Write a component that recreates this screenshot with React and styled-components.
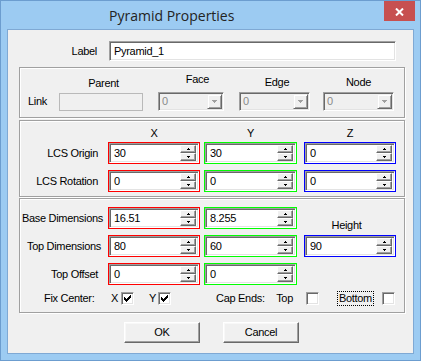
import React from 'react';
import styled, { createGlobalStyle } from 'styled-components';

const GlobalStyle = createGlobalStyle`
  html, body { margin: 0; padding: 0; background: #ffffff; }
  body {
    font-family: "Liberation Sans", Arial, sans-serif;
    font-size: 11px;
    letter-spacing: -0.3px;
    color: #000;
  }
  *, *::before, *::after { box-sizing: border-box; }
`;

const Window = styled.div`
  width: 421px;
  height: 361px;
  border: 1px solid #6c9dcf;
  background: #9ccbf2;
  display: flex;
  flex-direction: column;
`;

const TitleBar = styled.div`
  height: 28px;
  flex-shrink: 0;
  display: flex;
  align-items: flex-start;
`;

const Title = styled.div`
  flex: 1;
  padding: 5px 0 0 108px;
  font-family: "Open Sans", "Noto Sans", sans-serif;
  font-size: 14px;
  line-height: 19px;
  letter-spacing: 0;
  color: #232323;
`;

const CloseButton = styled.div`
  width: 31px;
  height: 20px;
  margin-right: 5px;
  background: #c75050;
  display: flex;
  align-items: center;
  justify-content: center;
  padding-top: 1px;
`;

const Client = styled.div`
  flex: 1;
  margin: 0 6px 6px;
  border: 1px solid #7fa9d4;
  background: #f0f0f0;
  padding: 11px 8px 0 11px;
  display: flex;
  flex-direction: column;
`;

const LabelRow = styled.div`
  display: grid;
  grid-template-columns: 78px 287px;
  column-gap: 12px;
  align-items: center;
  height: 20px;
  flex-shrink: 0;
`;

const Caption = styled.span`
  display: block;
  line-height: 13px;
  white-space: nowrap;
  text-align: ${(p) => p.$align || 'left'};
  padding-right: ${(p) => p.$pr || 0}px;
  padding-left: ${(p) => p.$pl || 0}px;
`;

const TextBox = styled.div`
  height: 20px;
  border: 1px solid;
  border-color: #a0a0a0 #ffffff #ffffff #a0a0a0;
  box-shadow: inset 1px 1px 0 #696969, inset -1px -1px 0 #e3e3e3;
  background: #fff;
  display: flex;
  align-items: center;
  padding: 0 4px;
  line-height: 13px;
`;

const Group = styled.div`
  flex-shrink: 0;
  height: ${(p) => p.$h}px;
  margin-top: ${(p) => p.$mt}px;
  border: 1px solid #a0a0a0;
  box-shadow: inset 1px 1px 0 #ffffff, 1px 1px 0 #ffffff;
  padding: ${(p) => p.$pad};
  display: flex;
  flex-direction: column;
`;

/* ---------- Link group ---------- */
const LinkRow = styled.div`
  flex: 1;
  display: flex;
  align-items: flex-end;
`;

const LinkLabel = styled.div`
  width: 31px;
  height: 18px;
  line-height: 17px;
`;

const LinkColumn = styled.div`
  width: ${(p) => p.$w}px;
  margin-left: ${(p) => p.$ml || 0}px;
  display: flex;
  flex-direction: column;
`;

const ColumnHeader = styled.div`
  line-height: 13px;
  text-align: center;
  padding-left: ${(p) => p.$shift || 0}px;
  margin-bottom: ${(p) => p.$lift}px;
`;

const ParentBox = styled.div`
  height: 18px;
  border: 1px solid #b9b9b9;
  background: #f0f0f0;
`;

const Combo = styled.div`
  height: 19px;
  border: 1px solid;
  border-color: #a0a0a0 #ffffff #ffffff #a0a0a0;
  box-shadow: inset 1px 1px 0 #696969, inset -1px -1px 0 #e3e3e3;
  background: #f0f0f0;
  padding: 1px;
  display: flex;
`;

const ComboText = styled.div`
  flex: 1;
  padding-left: 2px;
  line-height: 15px;
  color: #8a8a8a;
`;

const ComboButton = styled.div`
  width: 15px;
  border: 1px solid;
  border-color: #f0f0f0 #696969 #696969 #f0f0f0;
  box-shadow: inset 1px 1px 0 #ffffff, inset -1px -1px 0 #a0a0a0;
  background: #f0f0f0;
  display: flex;
  align-items: center;
  justify-content: center;
`;

/* ---------- coordinate grids ---------- */
const FieldGrid = styled.div`
  display: grid;
  grid-template-columns: 88px 96px 100px 92px;
  row-gap: ${(p) => p.$gap || 0}px;
  align-items: center;
  margin-bottom: ${(p) => p.$mb || 0}px;
`;

const AxisHeader = styled.div`
  width: ${(p) => p.$w}px;
  line-height: 13px;
  text-align: center;
  padding-right: ${(p) => p.$pr || 0}px;
  align-self: ${(p) => p.$self || 'center'};
  margin-bottom: ${(p) => p.$mb || 0}px;
`;

const SpinFrame = styled.div`
  width: ${(p) => p.$w}px;
  height: 22px;
  border: 1px solid ${(p) => p.$color};
  display: flex;
`;

const SpinInner = styled.div`
  flex: 1;
  display: flex;
  border: 1px solid;
  border-color: #a0a0a0 #ffffff #ffffff #a0a0a0;
  box-shadow: inset 1px 1px 0 #696969, inset -1px -1px 0 #e3e3e3;
  background: #ffffff;
  padding: 1px 2px 1px 1px;
`;

const SpinText = styled.div`
  flex: 1;
  padding-left: 3px;
  line-height: 16px;
`;

const SpinButtons = styled.div`
  width: 16px;
  display: flex;
  flex-direction: column;
`;

const SpinButton = styled.div`
  height: 8px;
  border: 1px solid;
  border-color: #ffffff #696969 #696969 #ffffff;
  box-shadow: inset -1px -1px 0 #a0a0a0;
  background: #f0f0f0;
  display: flex;
  align-items: center;
  justify-content: center;
`;

/* ---------- check row ---------- */
const FixRow = styled.div`
  display: flex;
  align-items: center;
  height: 13px;
  margin-top: 7px;
`;

const Cell = styled.div`
  width: ${(p) => p.$w}px;
  padding-left: ${(p) => p.$pl || 0}px;
  display: flex;
  align-items: center;
  justify-content: ${(p) => (p.$end ? 'flex-end' : 'flex-start')};
  gap: ${(p) => p.$gap || 0}px;
  line-height: 13px;
  white-space: nowrap;
`;

const FocusLabel = styled.span`
  outline: 1px dotted #000;
  outline-offset: 0;
  padding: 0 1px;
  line-height: 13px;
`;

const CheckBox = styled.div`
  width: 13px;
  height: 13px;
  border: 1px solid;
  border-color: #a0a0a0 #ffffff #ffffff #a0a0a0;
  box-shadow: inset 1px 1px 0 #696969, inset -1px -1px 0 #e3e3e3;
  background: #ffffff;
  display: flex;
  align-items: center;
  justify-content: center;
`;

/* ---------- buttons ---------- */
const ButtonRow = styled.div`
  display: flex;
  gap: 23px;
  padding-left: 105px;
  margin-top: 9px;
`;

const PushButton = styled.div`
  width: 76px;
  height: 21px;
  border: 1px solid;
  border-color: #ffffff #696969 #696969 #ffffff;
  box-shadow: inset -1px -1px 0 #a0a0a0, inset 1px 1px 0 #f8f8f8;
  background: #f0f0f0;
  display: flex;
  align-items: center;
  justify-content: center;
  line-height: 13px;
`;

/* ---------- drawings ---------- */
const ArrowUp = () => (
  <svg width="3" height="2" viewBox="0 0 3 2" shapeRendering="crispEdges">
    <path d="M1 0h1v1H1z M0 1h3v1H0z" fill="#000" />
  </svg>
);
const ArrowDown = () => (
  <svg width="3" height="2" viewBox="0 0 3 2" shapeRendering="crispEdges">
    <path d="M0 0h3v1H0z M1 1h1v1H1z" fill="#000" />
  </svg>
);
const ComboArrow = () => (
  <svg width="5" height="3" viewBox="0 0 5 3" shapeRendering="crispEdges">
    <path d="M0 0h5v1H0z M1 1h3v1H1z M2 2h1v1H2z" fill="#a0a0a0" />
  </svg>
);
const CheckMark = () => (
  <svg width="7" height="7" viewBox="0 0 7 7" shapeRendering="crispEdges">
    <path
      d="M6 0h1v1H6z M5 1h2v1H5z M0 2h1v1H0z M4 2h3v1H4z M0 3h2v1H0z M3 3h3v1H3z M0 4h5v1H0z M1 5h3v1H1z M2 6h1v1H2z"
      fill="#000"
    />
  </svg>
);
const CloseGlyph = () => (
  <svg width="9" height="8" viewBox="0 0 9 8">
    <path d="M1 0.5 L8 7.5 M8 0.5 L1 7.5" stroke="#fff" strokeWidth="2" />
  </svg>
);

const Spin = ({ value, color, w = 92 }) => (
  <SpinFrame $color={color} $w={w}>
    <SpinInner>
      <SpinText>{value}</SpinText>
      <SpinButtons>
        <SpinButton><ArrowUp /></SpinButton>
        <SpinButton><ArrowDown /></SpinButton>
      </SpinButtons>
    </SpinInner>
  </SpinFrame>
);

const DisabledCombo = () => (
  <Combo>
    <ComboText>0</ComboText>
    <ComboButton><ComboArrow /></ComboButton>
  </Combo>
);

const Check = ({ checked }) => <CheckBox>{checked && <CheckMark />}</CheckBox>;

const RED = '#ff0000';
const GREEN = '#00ff00';
const BLUE = '#0000ff';

export default function App() {
  return (
    <>
      <GlobalStyle />
      <Window>
        <TitleBar>
          <Title>Pyramid Properties</Title>
          <CloseButton><CloseGlyph /></CloseButton>
        </TitleBar>
        <Client>
          <LabelRow>
            <Caption $align="right">Label</Caption>
            <TextBox>Pyramid_1</TextBox>
          </LabelRow>

          <Group $h={51} $mt={6} $pad="0 0 6px 8px">
            <LinkRow>
              <LinkLabel>Link</LinkLabel>
              <LinkColumn $w={84}>
                <ColumnHeader $shift={5} $lift={3}>Parent</ColumnHeader>
                <ParentBox />
              </LinkColumn>
              <LinkColumn $w={66} $ml={15}>
                <ColumnHeader $shift={13} $lift={6}>Face</ColumnHeader>
                <DisabledCombo />
              </LinkColumn>
              <LinkColumn $w={71} $ml={15}>
                <ColumnHeader $shift={5} $lift={3}>Edge</ColumnHeader>
                <DisabledCombo />
              </LinkColumn>
              <LinkColumn $w={71} $ml={13}>
                <ColumnHeader $lift={3}>Node</ColumnHeader>
                <DisabledCombo />
              </LinkColumn>
            </LinkRow>
          </Group>

          <Group $h={77} $mt={2} $pad="6px 0 0 0">
            <FieldGrid $mb={2}>
              <span />
              <AxisHeader $w={92}>X</AxisHeader>
              <AxisHeader $w={93}>Y</AxisHeader>
              <AxisHeader $w={92}>Z</AxisHeader>
            </FieldGrid>
            <FieldGrid $gap={6}>
              <Caption $align="right" $pr={10}>LCS Origin</Caption>
              <Spin value="30" color={RED} />
              <Spin value="30" color={GREEN} w={93} />
              <Spin value="0" color={BLUE} />
              <Caption $align="right" $pr={10}>LCS Rotation</Caption>
              <Spin value="0" color={RED} />
              <Spin value="0" color={GREEN} w={93} />
              <Spin value="0" color={BLUE} />
            </FieldGrid>
          </Group>

          <Group $h={115} $mt={1} $pad="8px 0 0 0">
            <FieldGrid $gap={6}>
              <Caption $align="right" $pr={5}>Base Dimensions</Caption>
              <Spin value="16.51" color={RED} />
              <Spin value="8.255" color={GREEN} w={93} />
              <AxisHeader $w={92} $pr={7} $self="end" $mb={-3}>Height</AxisHeader>
              <Caption $align="right" $pr={7}>Top Dimensions</Caption>
              <Spin value="80" color={RED} />
              <Spin value="60" color={GREEN} w={93} />
              <Spin value="90" color={BLUE} />
              <Caption $align="right" $pr={10}>Top Offset</Caption>
              <Spin value="0" color={RED} />
              <Spin value="0" color={GREEN} w={93} />
              <span />
            </FieldGrid>
            <FixRow>
              <Cell $w={89} $pl={24}>Fix Center:</Cell>
              <Cell $w={25} $end $gap={3}>X<Check checked /></Cell>
              <Cell $w={37} $end $gap={2}>Y<Check checked /></Cell>
              <Cell $w={95} $pl={45}>Cap Ends:</Cell>
              <Cell $w={53} $end $gap={13}>Top<Check /></Cell>
              <Cell $w={76} $end $gap={9}><FocusLabel>Bottom</FocusLabel><Check /></Cell>
            </FixRow>
          </Group>

          <ButtonRow>
            <PushButton>OK</PushButton>
            <PushButton>Cancel</PushButton>
          </ButtonRow>
        </Client>
      </Window>
    </>
  );
}
